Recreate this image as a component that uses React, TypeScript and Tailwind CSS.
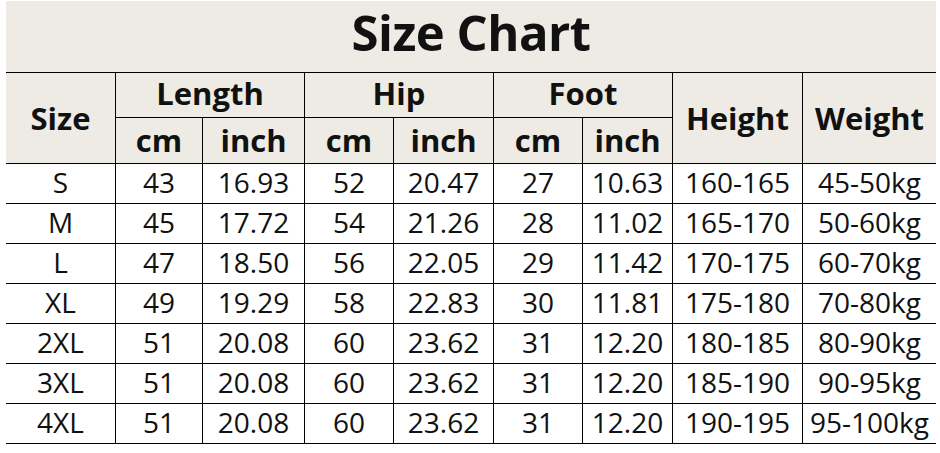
const rows = [
  ["S", "43", "16.93", "52", "20.47", "27", "10.63", "160-165", "45-50kg"],
  ["M", "45", "17.72", "54", "21.26", "28", "11.02", "165-170", "50-60kg"],
  ["L", "47", "18.50", "56", "22.05", "29", "11.42", "170-175", "60-70kg"],
  ["XL", "49", "19.29", "58", "22.83", "30", "11.81", "175-180", "70-80kg"],
  ["2XL", "51", "20.08", "60", "23.62", "31", "12.20", "180-185", "80-90kg"],
  ["3XL", "51", "20.08", "60", "23.62", "31", "12.20", "185-190", "90-95kg"],
  ["4XL", "51", "20.08", "60", "23.62", "31", "12.20", "190-195", "95-100kg"],
];

const head = "flex items-center justify-center bg-[#edebe4] border-black font-bold text-[31px] text-[#111]";

export default function App() {
  return (
    <div className="w-[940px] h-[453px] bg-white pl-[6px] pt-[1px] font-['Open_Sans',sans-serif]">
      <div className="w-[930px]">
        <div className="flex h-[71px] items-center justify-center bg-[#edebe4] pb-[7px] text-[49px] font-bold tracking-[-0.5px] text-[#111]">
          Size Chart
        </div>
        <div className="grid grid-cols-[110px_87px_102px_89px_100px_89px_90px_130px_133px] grid-rows-[45px_46px] border-t border-black">
          <div className={`${head} row-span-2 border-r border-b`}>Size</div>
          <div className={`${head} col-span-2 border-r border-b pb-1`}>Length</div>
          <div className={`${head} col-span-2 border-r border-b pb-1`}>Hip</div>
          <div className={`${head} col-span-2 border-r border-b pb-1`}>Foot</div>
          <div className={`${head} row-span-2 border-r border-b`}>Height</div>
          <div className={`${head} row-span-2 border-b`}>Weight</div>
          {["cm", "inch", "cm", "inch", "cm", "inch"].map((t, i) => (
            <div key={i} className={`${head} border-r border-b`}>
              {t}
            </div>
          ))}
          {rows.map((r) =>
            r.map((c, j) => (
              <div
                key={r[0] + j}
                className={`flex h-[40px] items-center justify-center border-b border-black pb-[3px] text-[28px] text-[#111] ${
                  j < 8 ? "border-r" : ""
                }`}
              >
                {c}
              </div>
            ))
          )}
        </div>
      </div>
    </div>
  );
}
